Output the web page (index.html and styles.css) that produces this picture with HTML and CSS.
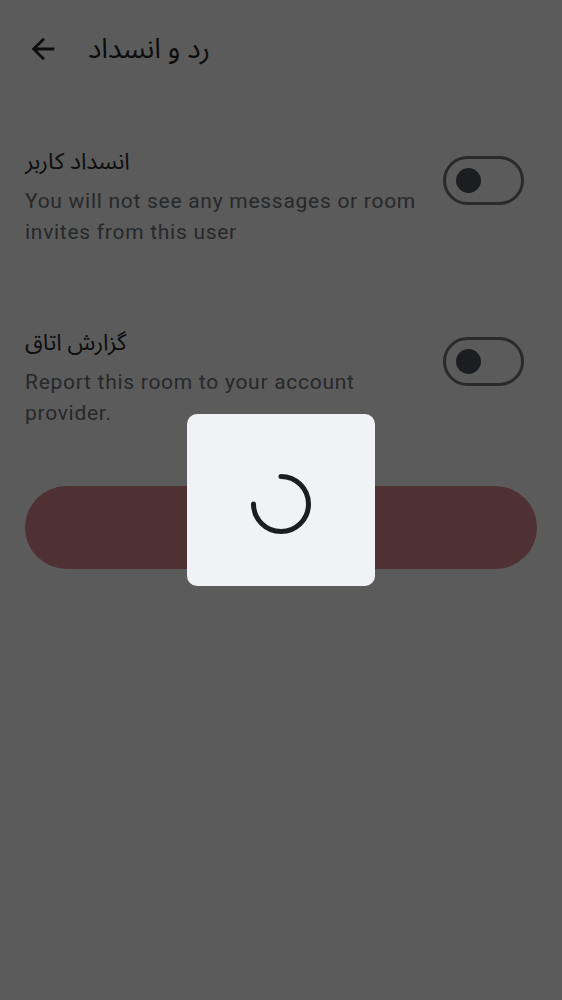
FILE: index.html
```html
<!DOCTYPE html>
<html lang="fa">
<head>
<meta charset="utf-8">
<title>رد و انسداد</title>
<link rel="stylesheet" href="styles.css">
</head>
<body>
<div class="page">
  <header class="topbar">
    <svg class="back" viewBox="0 0 24 24" aria-hidden="true"><path d="M20 11H7.83l5.59-5.59L12 4l-8 8 8 8 1.41-1.41L7.83 13H20v-2z"/></svg>
    <h1 class="title">رد و انسداد</h1>
  </header>
  <main class="content">
    <section class="row">
      <div class="text">
        <div class="row-title">انسداد کاربر</div>
        <div class="row-sub">You will not see any messages or room invites from this user</div>
      </div>
      <div class="switch"><span class="knob"></span></div>
    </section>
    <section class="row row-second">
      <div class="text">
        <div class="row-title">گزارش اتاق</div>
        <div class="row-sub">Report this room to your account provider.</div>
      </div>
      <div class="switch"><span class="knob"></span></div>
    </section>
    <div class="action"></div>
  </main>
</div>
<div class="overlay">
  <div class="dialog">
    <svg class="spinner" viewBox="0 0 62 62" aria-hidden="true"><path d="M31 3.5A27.5 27.5 0 1 1 3.5 31"/></svg>
  </div>
</div>
</body>
</html>
```

FILE: styles.css
```css
html, body {
  margin: 0;
  padding: 0;
}
body {
  background: #f0f0f0;
  font-family: Roboto, "Noto Sans Arabic", "DejaVu Sans", sans-serif;
  width: 562px;
  height: 1000px;
  overflow: hidden;
}
.page {
  height: 1000px;
}
.topbar {
  height: 98px;
  display: flex;
  align-items: center;
  padding-left: 26px;
  box-sizing: border-box;
}
.back {
  width: 34px;
  height: 34px;
  fill: #222222;
  flex: none;
}
.title {
  margin: 0 0 0 28px;
  font-size: 28px;
  font-weight: 400;
  color: #222222;
  line-height: 34px;
}
.content {
  padding: 50px 25px 0 25px;
}
.row {
  display: flex;
  align-items: flex-start;
  gap: 14px;
}
.row-second {
  margin-top: 81px;
}
.text {
  flex: 1;
  min-width: 0;
}
.row-title {
  font-size: 23px;
  line-height: 28px;
  color: #26282b;
  margin-bottom: 10px;
}
.row-sub {
  font-size: 21px;
  letter-spacing: 0.72px;
  line-height: 31px;
  color: #65696f;
}
.switch {
  flex: none;
  width: 81px;
  height: 49px;
  box-sizing: border-box;
  border: 3px solid #6a6e74;
  border-radius: 25px;
  margin-top: 8px;
  margin-right: 13px;
  display: flex;
  align-items: center;
  padding-left: 10px;
}
.knob {
  width: 25px;
  height: 25px;
  border-radius: 50%;
  background: #4a4e54;
}
.action {
  margin-top: 57px;
  height: 83px;
  border-radius: 42px;
  background: #d07f87;
}
.overlay {
  position: fixed;
  inset: 0;
  background: rgba(0, 0, 0, 0.62);
  display: flex;
  align-items: center;
  justify-content: center;
}
.dialog {
  width: 188px;
  height: 172px;
  border-radius: 10px;
  background: #f0f2f5;
  display: flex;
  align-items: center;
  justify-content: center;
}
.spinner {
  width: 62px;
  height: 62px;
  margin-top: 8px;
  fill: none;
  stroke: #1c1d21;
  stroke-width: 5;
  stroke-linecap: round;
}
```
